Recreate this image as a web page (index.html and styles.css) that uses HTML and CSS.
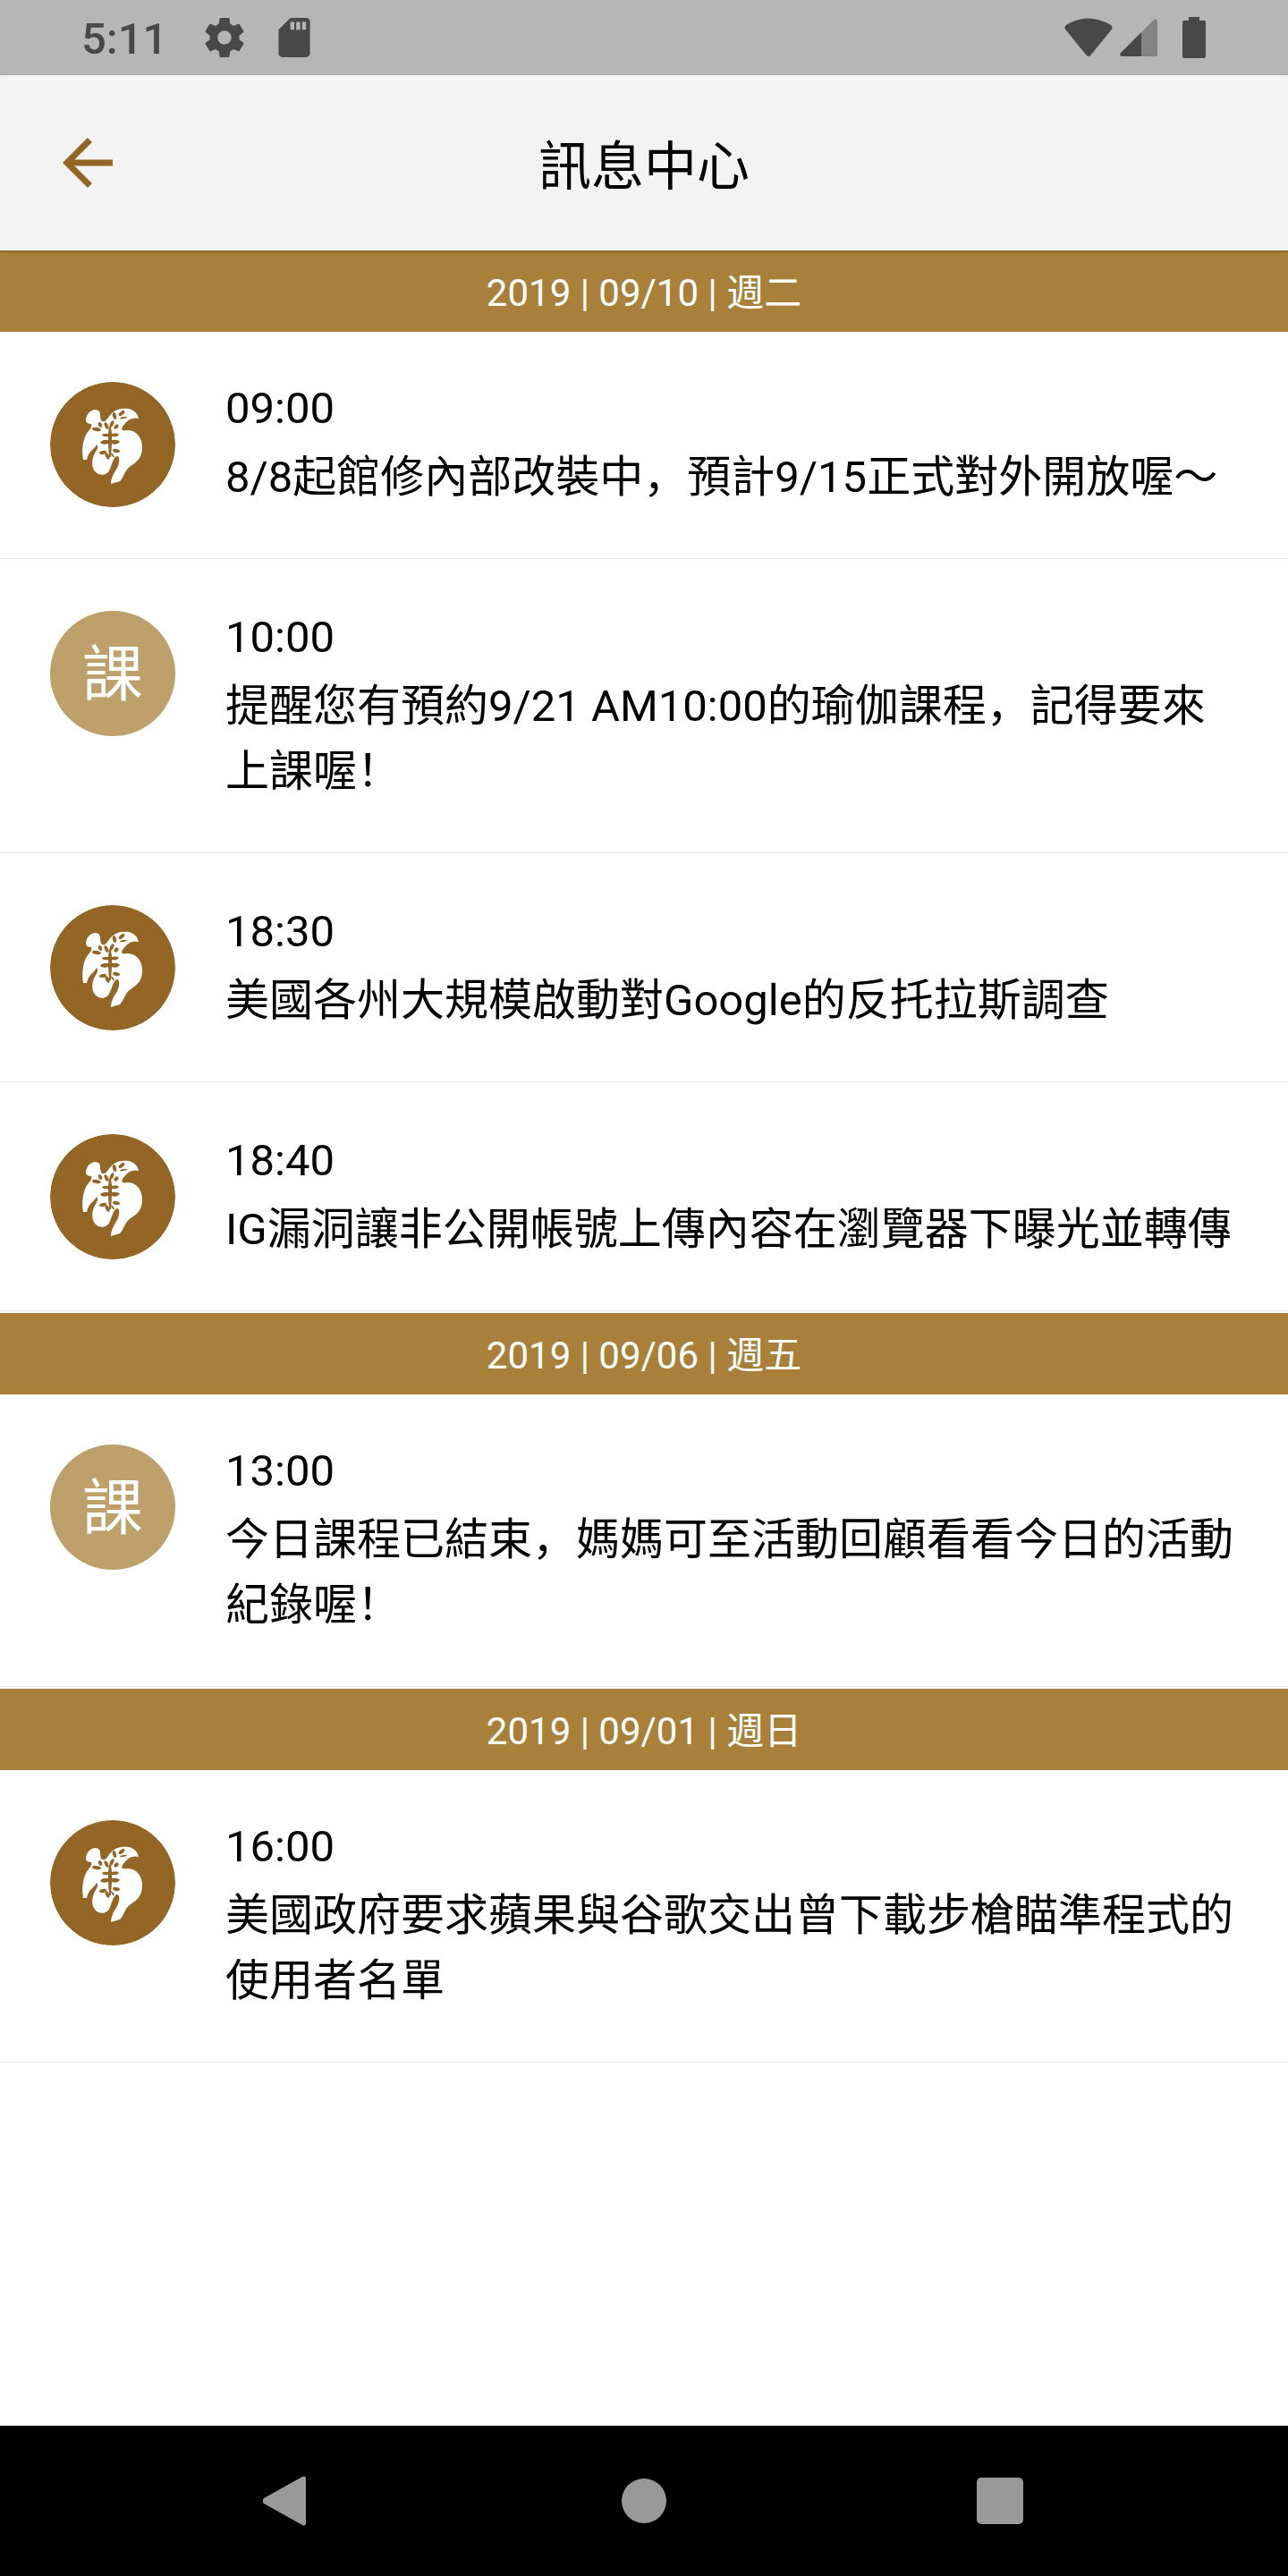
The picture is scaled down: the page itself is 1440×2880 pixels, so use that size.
FILE: index.html
```
<!DOCTYPE html>
<html lang="zh-Hans">
<head>
    <meta charset="UTF-8">
    <meta name="viewport" content="width=device-width, initial-scale=1.0">
    <title>訊息中心</title>
    <link rel="stylesheet" href="styles.css">
</head>
<body>
    <!-- shared icons -->
    <svg class="symbols" aria-hidden="true">
        <symbol id="logo" viewBox="0 0 140 140">
            <circle cx="70" cy="70" r="70" fill="#936626"/>
            <path fill="#fff" d="M40 44C40 36 45 31 51 31C58 32 55 37 57 43C61 46 63 43 67 37C73 30 81 29 88 30C95 32 98 36 99 41C91 39 86 43 81 50C79 54 81 55 87 54C97 54 103 63 103 73C103 84 98 89 90 94C83 99 83 106 78 111L68 114C68 107 72 101 75 96C78 90 78 83 75 83C71 84 70 90 67 97C65 103 60 105 54 103C46 99 45 88 51 78C53 75 54 72 52 70C49 76 43 77 41 87L37 87C35 75 37 63 42 56C45 52 47 51 46 47C43 47 41 46 40 44Z"/>
            <g fill="#936626">
                <path d="M66 50H68L69 58Q75 56 77 59Q75 62 69 61V65Q76 64 78 67Q75 71 69 69L68 84H66L65 69Q59 71 56 68Q58 64 65 65V61Q59 62 58 59Q60 57 65 58Z"/>
                <ellipse cx="52" cy="53" rx="5" ry="2" transform="rotate(10 52 53)"/>
                <ellipse cx="56" cy="48" rx="3" ry="2" transform="rotate(65 56 48)"/>
                <ellipse cx="63" cy="49" rx="4" ry="2" transform="rotate(65 63 49)"/>
                <ellipse cx="69" cy="47" rx="4" ry="2" transform="rotate(-65 69 47)"/>
                <ellipse cx="74" cy="50" rx="3" ry="2" transform="rotate(-45 74 50)"/>
                <ellipse cx="72" cy="38" rx="4" ry="2" transform="rotate(75 72 38)"/>
                <ellipse cx="80" cy="35" rx="4" ry="2" transform="rotate(-40 80 35)"/>
                <ellipse cx="82" cy="40" rx="4" ry="1" transform="rotate(-10 82 40)"/>
                <ellipse cx="59" cy="79" rx="4" ry="2" transform="rotate(-10 59 79)"/>
                <ellipse cx="64" cy="83" rx="4" ry="2" transform="rotate(65 64 83)"/>
                <ellipse cx="74" cy="77" rx="4" ry="2" transform="rotate(10 74 77)"/>
                <ellipse cx="70" cy="82" rx="3" ry="1" transform="rotate(55 70 82)"/>
            </g>
        </symbol>
    </svg>

    <div class="status-bar">
        <span class="clock">5:11</span>
        <svg class="gear" viewBox="2 2 20 20"><path d="M19.43 12.98c.04-.32.07-.64.07-.98s-.03-.66-.07-.98l2.11-1.65c.19-.15.24-.42.12-.64l-2-3.46c-.12-.22-.39-.3-.61-.22l-2.49 1c-.52-.4-1.08-.73-1.69-.98l-.38-2.65C14.46 2.18 14.25 2 14 2h-4c-.25 0-.46.18-.49.42l-.38 2.65c-.61.25-1.17.59-1.69.98l-2.49-1c-.23-.09-.49 0-.61.22l-2 3.46c-.13.22-.07.49.12.64l2.11 1.65c-.04.32-.07.65-.07.98s.03.66.07.98l-2.11 1.65c-.19.15-.24.42-.12.64l2 3.46c.12.22.39.3.61.22l2.49-1c.52.4 1.08.73 1.69.98l.38 2.65c.03.24.24.42.49.42h4c.25 0 .46-.18.49-.42l.38-2.65c.61-.25 1.17-.59 1.69-.98l2.49 1c.23.09.49 0 .61-.22l2-3.46c.12-.22.07-.49-.12-.64l-2.11-1.65zM12 15.5c-1.93 0-3.5-1.57-3.5-3.5s1.57-3.5 3.5-3.5 3.5 1.57 3.5 3.5-1.57 3.5-3.5 3.5z"/></svg>
        <svg class="card" viewBox="4 2 16 20"><path d="M18 2h-8L4.02 8 4 20c0 1.100.9 2 2 2h12c1.100 0 2-.9 2-2V4c0-1.100-.9-2-2-2zm-6 6h-2V4h2v4zm3 0h-2V4h2v4zm3 0h-2V4h2v4z"/></svg>
        <div class="status-right">
            <svg class="wifi" viewBox="0 0 54 44"><path d="M2 8Q26-7 52 8Q55 11 52 14L30 41Q27 45 24 41L2 14Q-1 11 2 8Z"/></svg>
            <svg class="signal" viewBox="0 0 42 42"><path opacity=".45" d="M24 15L38 1Q42-1 42 3V40Q42 42 40 42H24Z"/><path d="M24 15V42H2Q-1 41 1 38Z"/></svg>
            <svg class="battery" viewBox="0 0 26 46"><path d="M7 0H19V4H24Q26 4 26 6V44Q26 46 24 46H2Q0 46 0 44V6Q0 4 2 4H7Z"/></svg>
        </div>
    </div>

    <header class="header">
        <button class="back" type="button" aria-label="返回">
            <svg viewBox="4 4 16 16"><path d="M20 11H7.830l5.590-5.590L12 4l-8 8 8 8 1.410-1.410L7.830 13H20v-2z"/></svg>
        </button>
        <h1>訊息中心</h1>
    </header>

    <main>
        <section>
            <h2>2019 | 09/10 | 週二</h2>
            <article class="message">
                <svg class="avatar"><use href="#logo"/></svg>
                <div class="text">
                    <time>09:00</time>
                    <p>8/8起館修內部改裝中，預計9/15正式對外開放喔～</p>
                </div>
            </article>
            <article class="message">
                <div class="avatar course">課</div>
                <div class="text">
                    <time>10:00</time>
                    <p>提醒您有預約9/21 AM10:00的瑜伽課程，記得要來上課喔！</p>
                </div>
            </article>
            <article class="message">
                <svg class="avatar"><use href="#logo"/></svg>
                <div class="text">
                    <time>18:30</time>
                    <p>美國各州大規模啟動對Google的反托拉斯調查</p>
                </div>
            </article>
            <article class="message">
                <svg class="avatar"><use href="#logo"/></svg>
                <div class="text">
                    <time>18:40</time>
                    <p>IG漏洞讓非公開帳號上傳內容在瀏覽器下曝光並轉傳</p>
                </div>
            </article>
        </section>

        <section>
            <h2>2019 | 09/06 | 週五</h2>
            <article class="message">
                <div class="avatar course">課</div>
                <div class="text">
                    <time>13:00</time>
                    <p>今日課程已結束，媽媽可至活動回顧看看今日的活動紀錄喔！</p>
                </div>
            </article>
        </section>

        <section>
            <h2>2019 | 09/01 | 週日</h2>
            <article class="message">
                <svg class="avatar"><use href="#logo"/></svg>
                <div class="text">
                    <time>16:00</time>
                    <p>美國政府要求蘋果與谷歌交出曾下載步槍瞄準程式的使用者名單</p>
                </div>
            </article>
        </section>
    </main>

    <nav class="nav-bar">
        <button type="button" aria-label="Back"><svg viewBox="0 0 56 56"><path d="M44 1Q48-1 48 4V52Q48 57 44 55L1 31Q-2 28 1 25Z"/></svg></button>
        <button type="button" aria-label="Home"><svg viewBox="0 0 56 56"><circle cx="28" cy="28" r="25"/></svg></button>
        <button type="button" aria-label="Recent"><svg viewBox="0 0 56 56"><rect x="2" y="2" width="52" height="52" rx="5"/></svg></button>
    </nav>
</body>
</html>
```
FILE: styles.css
```
* {
    box-sizing: border-box;
}
body {
    display: flex;
    flex-direction: column;
    min-height: 100vh;
    margin: 0;
    background-color: #fff;
    color: #000;
    font-family: Roboto, "Noto Sans CJK SC", sans-serif;
    font-size: 49px;
}
button {
    padding: 0;
    border: none;
    background: none;
    cursor: pointer;
}
.symbols {
    position: absolute;
    width: 0;
    height: 0;
}

/* status bar */
.status-bar {
    display: flex;
    align-items: center;
    height: 84px;
    padding: 0 92px 0 91px;
    background-color: #b6b6b6;
    color: #484848;
    fill: #484848;
}
.clock {
    padding-top: 4px;
    font-weight: 500;
    line-height: 80px;
}
.gear {
    width: 44px;
    height: 44px;
    margin-left: 42px;
}
.card {
    width: 36px;
    height: 44px;
    margin-left: 38px;
}
.status-right {
    display: flex;
    align-items: center;
    margin-left: auto;
}
.wifi {
    width: 54px;
    height: 44px;
}
.signal {
    width: 42px;
    height: 42px;
    margin-left: 8px;
}
.battery {
    width: 26px;
    height: 46px;
    margin-left: 28px;
}

/* header */
.header {
    position: relative;
    display: grid;
    grid-template-columns: 56px 1fr 56px;
    align-items: center;
    height: 196px;
    padding: 0 70px;
    background-color: #f3f3f3;
    box-shadow: 0 1px 3px rgba(0, 0, 0, 0.3);
}
.back,
.back svg {
    display: block;
    width: 56px;
    height: 56px;
    fill: #936626;
}
h1 {
    margin: 0;
    padding-top: 10px;
    font-size: 59px;
    font-weight: 400;
    line-height: 84px;
    text-align: center;
}

/* messages */
h2 {
    margin: 0;
    padding-top: 5px;
    background-color: #a88039;
    color: #fff;
    font-size: 42px;
    font-weight: 400;
    line-height: 86px;
    text-align: center;
}
.message {
    display: flex;
    gap: 56px;
    margin-bottom: 2px;
    padding: 56px 56px 54px;
    border-bottom: 1px solid #e8e8e8;
}
.avatar {
    flex: none;
    width: 140px;
    height: 140px;
    border-radius: 50%;
}
.course {
    background-color: #bda06a;
    color: #fff;
    font-size: 68px;
    line-height: 144px;
    text-align: center;
}
.text {
    flex: 1;
}
time {
    display: block;
    line-height: 60px;
}
.text p {
    margin: 10px 0 0;
    line-height: 73px;
}

/* navigation bar */
.nav-bar {
    display: flex;
    justify-content: center;
    gap: 342px;
    margin-top: auto;
    padding: 56px 0;
    background-color: #000;
}
.nav-bar svg {
    display: block;
    width: 56px;
    height: 56px;
    fill: #999;
}
```
